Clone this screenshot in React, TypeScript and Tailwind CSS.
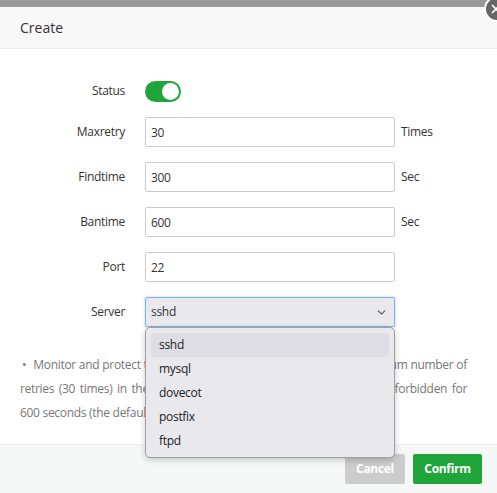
import { ChevronDown, X } from 'lucide-react';

const rows = [
    { label: 'Maxretry', value: '30', unit: 'Times' },
    { label: 'Findtime', value: '300', unit: 'Sec' },
    { label: 'Bantime', value: '600', unit: 'Sec' },
    { label: 'Port', value: '22', unit: '' },
];

const servers = ['sshd', 'mysql', 'dovecot', 'postfix', 'ftpd'];

export default function App() {
    return (
        <div className="relative w-[497px] h-[493px] overflow-hidden bg-[#999999] text-[#333] font-['Open_Sans',sans-serif] tracking-[-0.3px]">
            <div className="absolute left-[484px] top-[-4px] w-[26px] h-[26px] rounded-full bg-[#666] border-2 border-white z-20 flex items-center justify-start pl-[3px]">
                <X size={14} strokeWidth={3} className="text-white" />
            </div>

            <div className="mt-[7px] h-[486px] bg-white flex flex-col">
                <div className="h-[42px] bg-[#f8f8f8] border-b border-[#eee] flex items-center px-5 text-[14px] tracking-normal">Create</div>

                <div className="flex-1 pt-[27px] px-5 relative">
                    <div className="flex items-center h-[30px] mb-[11px]">
                        <div className="w-[105px] text-right text-[12px]">Status</div>
                        <div className="ml-5 w-[36px] h-[21px] rounded-full bg-[#20a53a] relative">
                            <div className="absolute right-[2px] top-[2px] w-[17px] h-[17px] rounded-full bg-white" />
                        </div>
                    </div>

                    {rows.map((r) => (
                        <div key={r.label} className="flex items-center h-[30px] mb-[15px]">
                            <div className="w-[105px] text-right text-[12px]">{r.label}</div>
                            <input
                                readOnly
                                value={r.value}
                                className="ml-5 w-[250px] h-[30px] border border-[#ccc] rounded-[2px] px-[5px] text-[12px] outline-none"
                            />
                            {r.unit && <span className="ml-[6px] text-[12px]">{r.unit}</span>}
                        </div>
                    ))}

                    <div className="flex items-center h-[30px]">
                        <div className="w-[105px] text-right text-[12px]">Server</div>
                        <div className="ml-5 w-[250px] h-[30px] border border-[#7fb3e8] rounded-[2px] bg-[#e9e8ec] px-[5px] text-[12px] flex items-center justify-between shadow-[0_0_3px_rgba(100,160,230,0.5)]">
                            <span>sshd</span>
                            <ChevronDown size={13} className="text-[#555] mr-[1px]" />
                        </div>
                    </div>

                    <div className="mt-[26px] text-[12px] leading-[24px] text-[#777] w-[447px] whitespace-nowrap">
                        <div className="text-justify [text-align-last:justify]">
                            <span className="ml-[2px] mr-[7px]">•</span>Monitor and protect the SSH service from attacks; when the maximum number of
                        </div>
                        <div className="text-justify [text-align-last:justify]">
                            retries (30 times) in the set time (300 seconds) is reached, the IP is forbidden for
                        </div>
                        <div>600 seconds (the default setting).</div>
                    </div>

                    <div className="absolute left-[145px] top-[278px] w-[250px] h-[131px] bg-[#e9e8ec] border border-[#a0a0a0] rounded-[5px] shadow-[0_2px_6px_rgba(0,0,0,0.2)] py-[5px] px-[5px] z-10">
                        {servers.map((s, i) => (
                            <div
                                key={s}
                                className={`h-[24px] flex items-center px-[8px] text-[12px] text-[#222] rounded-[3px] ${i === 0 ? 'bg-[#dedde3]' : ''}`}
                            >
                                {s}
                            </div>
                        ))}
                    </div>
                </div>

                <div className="h-[49px] shrink-0 bg-[#f6f8f8] border-t border-[#eee] flex items-center justify-end pr-[15px] gap-2">
                    <button className="h-[30px] w-[60px] rounded-[2px] bg-[#cccccc] text-white text-[12px] font-bold">Cancel</button>
                    <button className="h-[30px] w-[69px] rounded-[2px] bg-[#20a53a] text-white text-[12px] font-bold">Confirm</button>
                </div>
            </div>
        </div>
    );
}
